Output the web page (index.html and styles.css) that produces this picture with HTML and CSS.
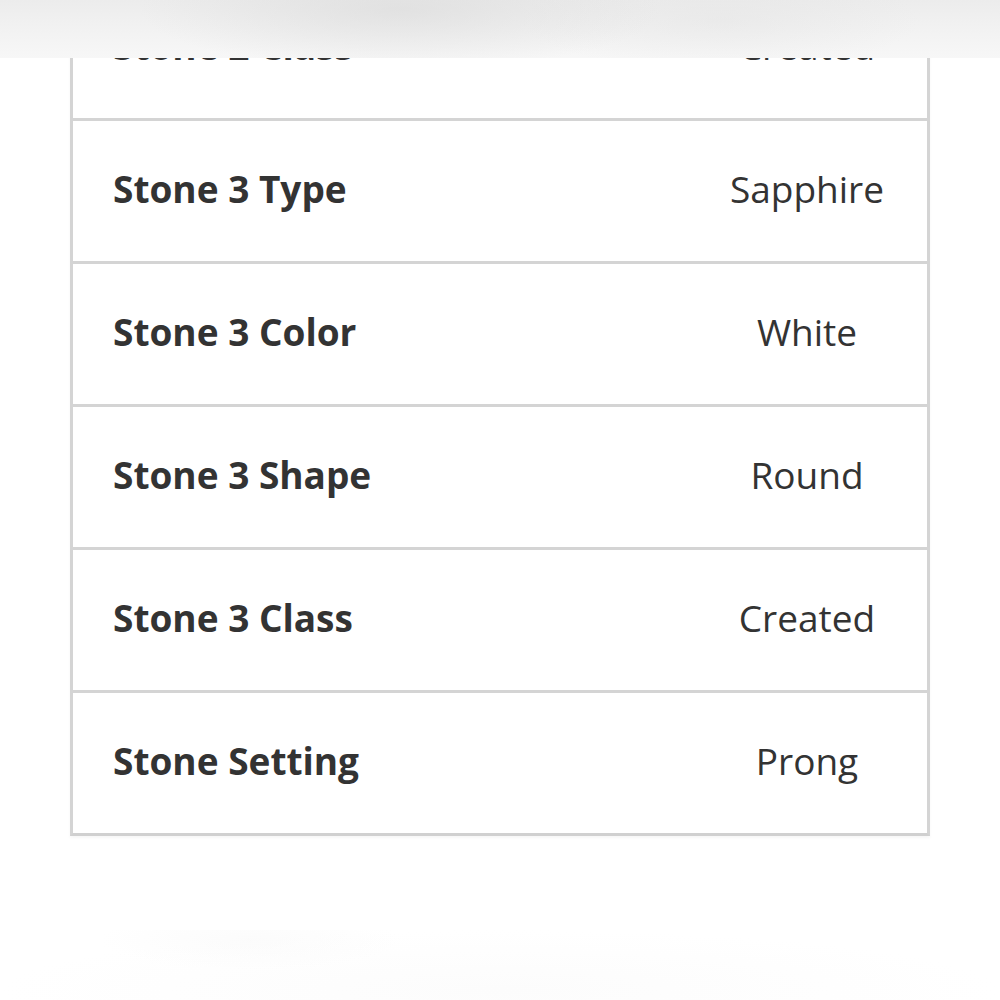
FILE: index.html
```html
<!DOCTYPE html>
<html lang="en">
<head>
  <meta charset="UTF-8">
  <meta name="viewport" content="width=device-width, initial-scale=1.0">
  <title>Stone Details</title>
  <link rel="stylesheet" href="styles.css">
</head>
<body>
  <div class="top-blur"></div>

  <div class="specs">
    <div class="spec-row">
      <div class="spec-name">Stone 2 Class</div>
      <div class="spec-value">Created</div>
    </div>
    <div class="spec-row">
      <div class="spec-name">Stone 3 Type</div>
      <div class="spec-value">Sapphire</div>
    </div>
    <div class="spec-row">
      <div class="spec-name">Stone 3 Color</div>
      <div class="spec-value">White</div>
    </div>
    <div class="spec-row">
      <div class="spec-name">Stone 3 Shape</div>
      <div class="spec-value">Round</div>
    </div>
    <div class="spec-row">
      <div class="spec-name">Stone 3 Class</div>
      <div class="spec-value">Created</div>
    </div>
    <div class="spec-row">
      <div class="spec-name">Stone Setting</div>
      <div class="spec-value">Prong</div>
    </div>
  </div>

  <div class="bottom-blur"></div>
</body>
</html>
```

FILE: styles.css
```css
body {
  margin: 0;
  padding: 0;
  background-color: #ffffff;
  font-family: "Open Sans", Arial, sans-serif;
  color: #333333;
  height: 1000px;
  overflow: hidden;
  position: relative;
}
.top-blur {
  position: absolute;
  top: 0;
  left: 0;
  right: 0;
  height: 58px;
  z-index: 2;
  background:
    radial-gradient(ellipse 260px 60px at 400px 10px, rgba(215,215,215,0.55), rgba(215,215,215,0) 100%),
    radial-gradient(ellipse 200px 50px at 720px 20px, rgba(225,225,225,0.4), rgba(225,225,225,0) 100%),
    linear-gradient(to bottom, #ececec 0%, #f3f3f3 60%, #f7f7f7 100%);
}
.specs {
  margin: -25px 70px 0 70px;
  border-left: 3px solid #d4d4d4;
  border-right: 3px solid #d4d4d4;
  border-bottom: 3px solid #d0d0d0;
  box-shadow: 0 2px 3px rgba(0,0,0,0.04);
}
.spec-row {
  display: grid;
  grid-template-columns: 1fr 240px;
  align-items: center;
  height: 134px;
  padding-bottom: 6px;
  border-top: 3px solid #d4d4d4;
  font-size: 37px;
}
.spec-name {
  font-weight: 700;
  padding-left: 40px;
}
.spec-value {
  text-align: center;
}
.bottom-blur {
  position: absolute;
  left: 0;
  right: 0;
  bottom: 0;
  height: 70px;
  background:
    radial-gradient(ellipse 150px 30px at 250px 10px, rgba(246,246,246,0.4), rgba(246,246,246,0) 100%),
    radial-gradient(ellipse 500px 60px at 500px 60px, rgba(250,250,250,0.6), rgba(250,250,250,0) 100%);
}
```
